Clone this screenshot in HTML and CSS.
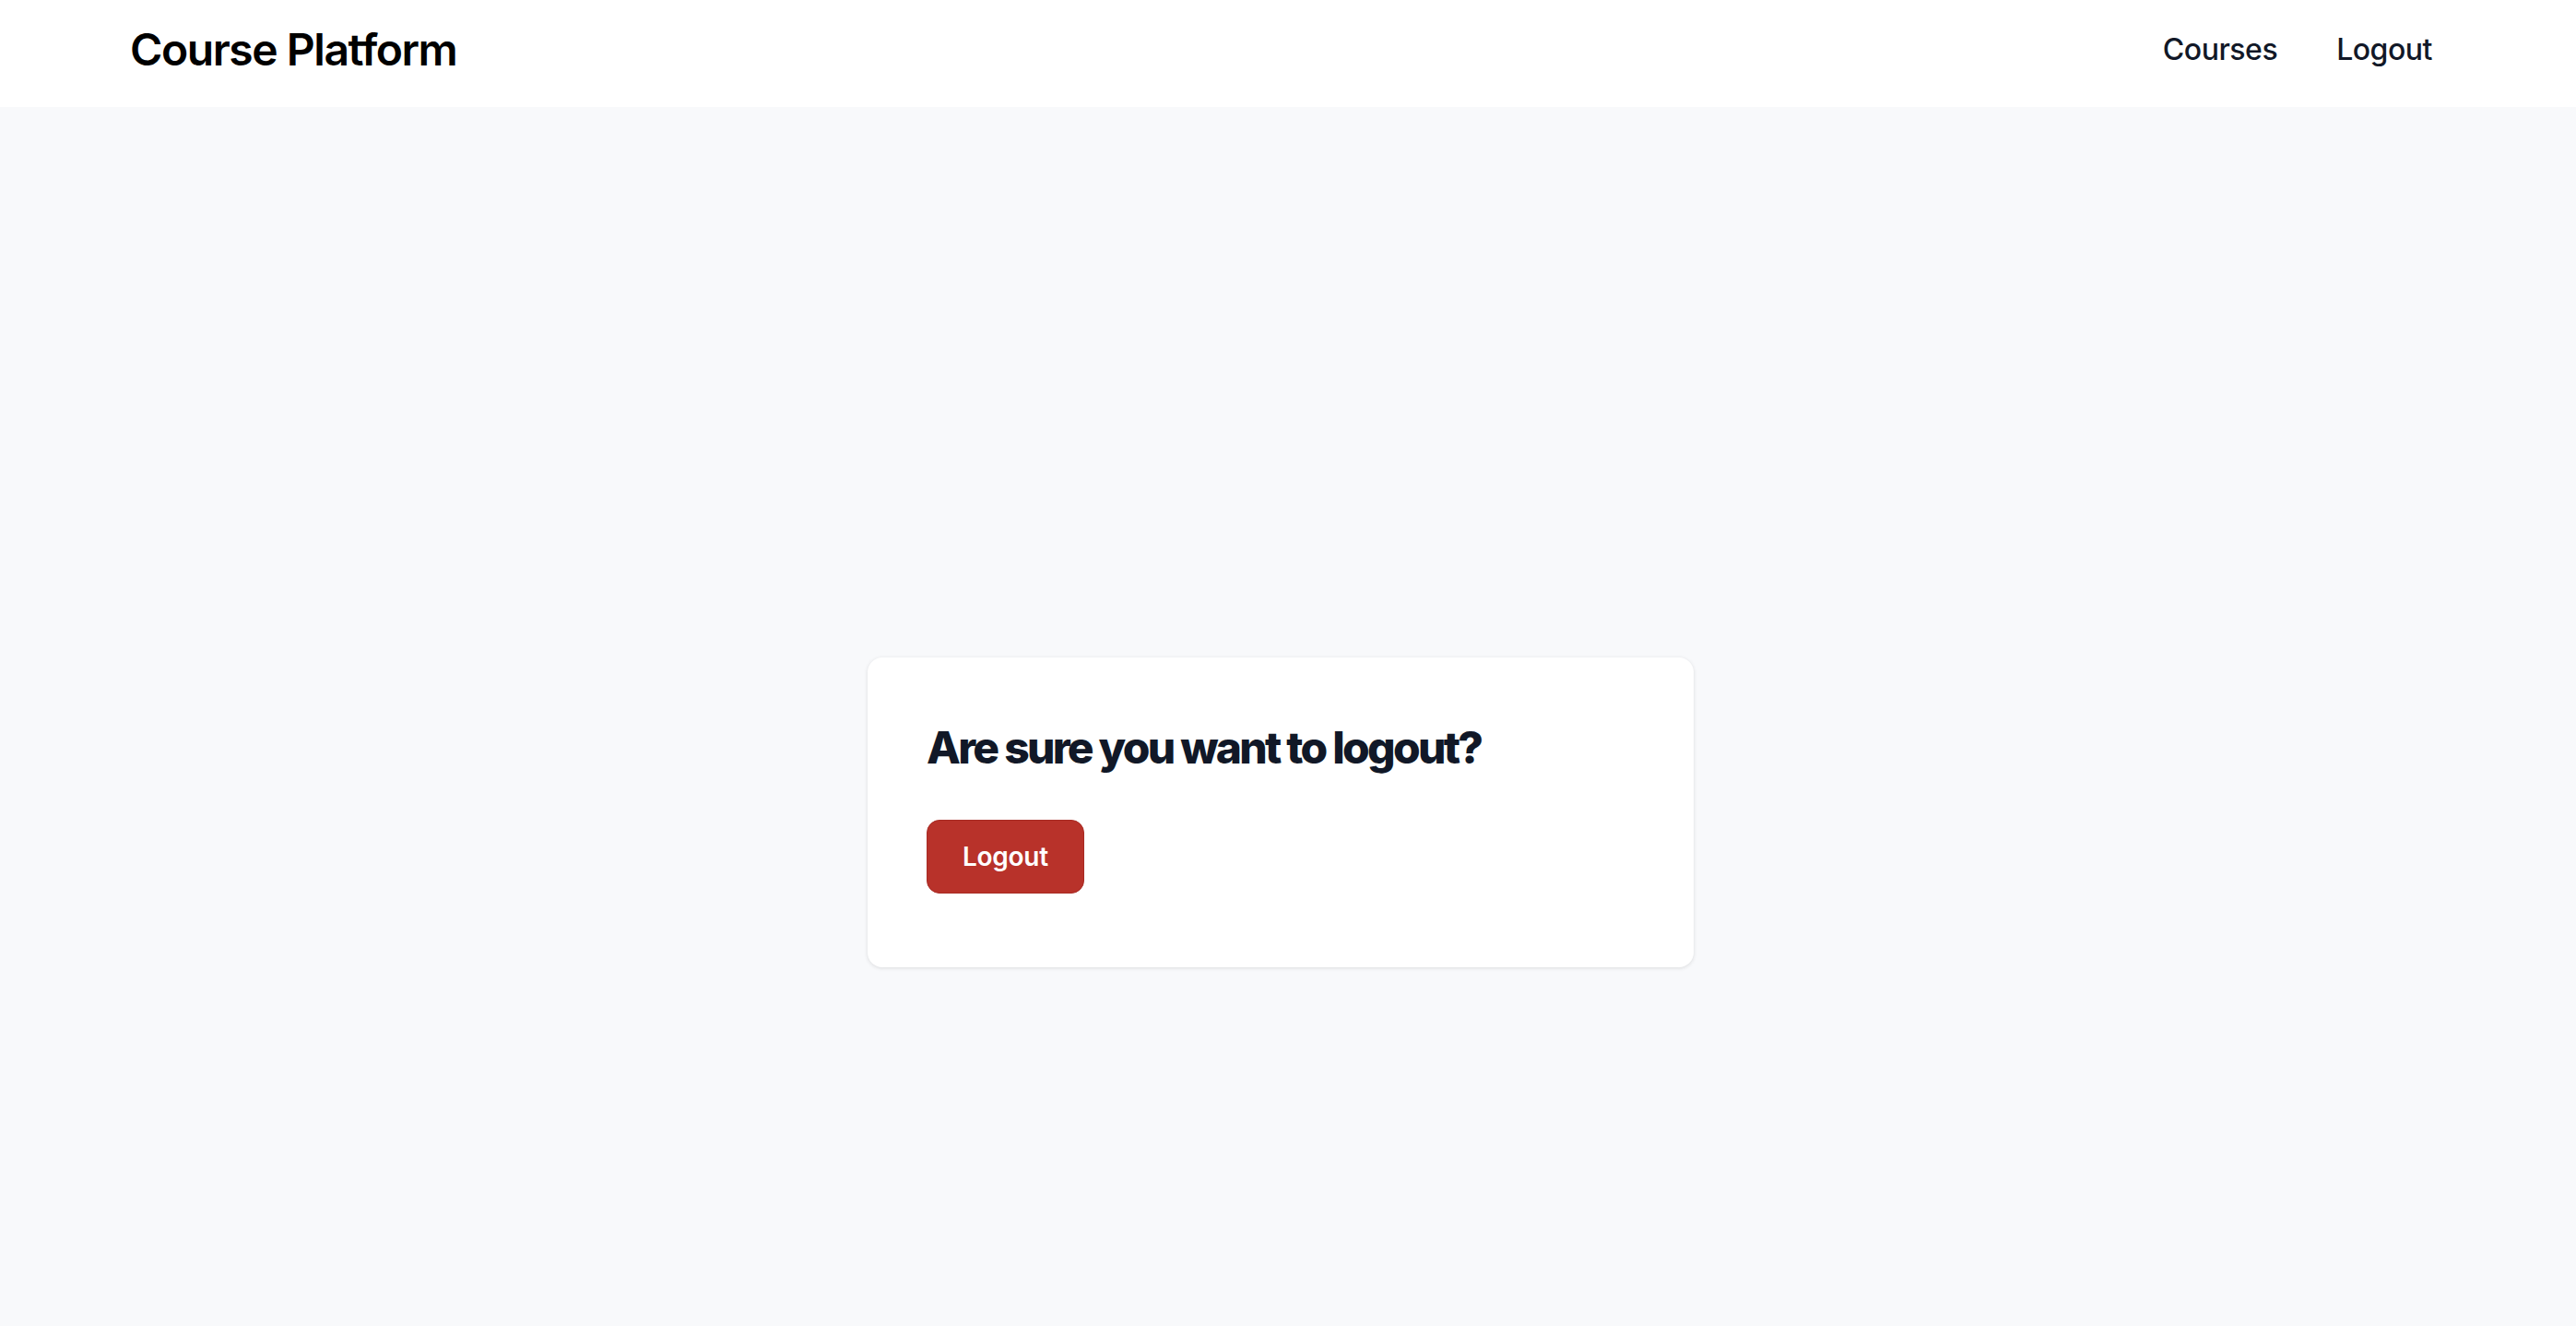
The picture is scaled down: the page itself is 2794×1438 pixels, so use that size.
FILE: index.html
```html
<!DOCTYPE html>
<html lang="en">
<head>
<meta charset="utf-8">
<title>Course Platform</title>
<link rel="stylesheet" href="styles.css">
</head>
<body>
<header class="site-header">
  <div class="header-inner">
    <a class="brand" href="#">Course Platform</a>
    <nav class="nav">
      <a class="nav-link" href="#">Courses</a>
      <a class="nav-link" href="#">Logout</a>
    </nav>
  </div>
</header>
<main class="main">
  <section class="card">
    <h1 class="card-title">Are sure you want to logout?</h1>
    <form class="card-form">
      <button class="btn-logout" type="button">Logout</button>
    </form>
  </section>
</main>
</body>
</html>
```

FILE: styles.css
```css
* { box-sizing: border-box; }
html, body { margin: 0; padding: 0; }
body {
  font-family: Inter, "Noto Sans", "Liberation Sans", sans-serif;
  background: #f8f9fb;
  min-height: 100vh;
}
.site-header {
  background: #ffffff;
  height: 116px;
}
.header-inner {
  height: 106px;
  padding: 0 140px 0 141px;
  display: flex;
  align-items: center;
  justify-content: space-between;
}
.brand {
  font-size: 48px;
  font-weight: 600;
  color: #000000;
  text-decoration: none;
  letter-spacing: -0.03em;
}
.nav {
  display: flex;
  gap: 32px;
}
.nav-link {
  font-size: 32px;
  font-weight: 500;
  color: #111827;
  text-decoration: none;
  padding: 0 16px;
  letter-spacing: -0.015em;
}
.main {
  display: flex;
  justify-content: center;
  padding: 597px 16px 0 0;
}
.card {
  width: 896px;
  background: #ffffff;
  border-radius: 16px;
  box-shadow: 0 1px 4px rgba(0, 0, 0, 0.12);
  padding: 69px 64px 80px 64px;
}
.card-title {
  margin: 0 0 49px 0;
  font-size: 48px;
  line-height: 1.2;
  font-weight: 800;
  color: #111827;
  letter-spacing: -0.057em;
}
.card-form { margin: 0; }
.btn-logout {
  font-family: inherit;
  font-size: 28px;
  font-weight: 600;
  color: #ffffff;
  background: #b8322a;
  border: 1px solid #a82a23;
  border-radius: 14px;
  height: 80px;
  padding: 0 38px;
  cursor: pointer;
  letter-spacing: -0.01em;
}
```
